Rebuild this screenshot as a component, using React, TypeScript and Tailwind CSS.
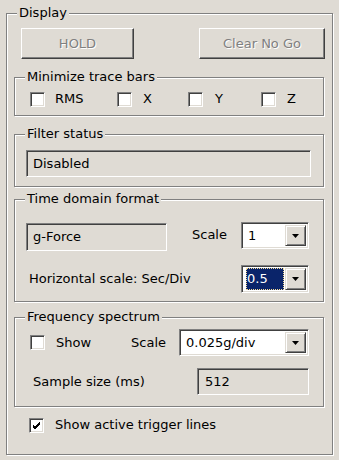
import React from "react";

function Group({ label, className, children }: { label: string; className: string; children?: React.ReactNode }) {
  return (
    <div className={"relative shrink-0 border border-[#808080] shadow-[inset_1px_1px_0_#fff,1px_1px_0_#fff] " + className}>
      <span className="absolute left-[10px] top-[-9px] bg-[#dfdbd4] px-[2px] leading-[16px] text-black whitespace-nowrap">
        {label}
      </span>
      {children}
    </div>
  );
}

function Check({ checked }: { checked?: boolean }) {
  return (
    <span className="relative flex h-[15px] w-[15px] shrink-0 items-center justify-center border border-t-[#808080] border-l-[#808080] border-b-white border-r-white bg-white shadow-[inset_1px_1px_0_#404040,inset_-1px_-1px_0_#dfdbd4]">
      {checked && (
        <svg width="9" height="9" viewBox="0 0 9 9">
          <path d="M1 4 L3 6 L8 1 M1 5 L3 7 L8 2 M1 6 L3 8 L8 3" stroke="#000" strokeWidth="1" fill="none" shapeRendering="crispEdges" />
        </svg>
      )}
    </span>
  );
}

function Sunken({ className, children }: { className: string; children?: React.ReactNode }) {
  return (
    <div className={"flex items-center border border-t-[#808080] border-l-[#808080] border-b-white border-r-white shadow-[inset_1px_1px_0_#404040,inset_-1px_-1px_0_#dfdbd4] " + className}>
      {children}
    </div>
  );
}

function Combo({ className, value, selected }: { className: string; value: string; selected?: boolean }) {
  return (
    <Sunken className={"bg-white p-[2px] " + className}>
      <div className="flex h-full flex-1 items-center pl-[2px] pr-[1px]">
        {selected ? (
          <span className="flex h-full flex-1 items-center bg-[#0a246a] pl-[1px] text-white outline outline-1 outline-dotted outline-[#f5db95] -outline-offset-1">
            {value}
          </span>
        ) : (
          <span className="pl-[2px] text-black">{value}</span>
        )}
      </div>
      <div className="flex h-full w-[21px] items-center justify-center border border-t-[#dfdbd4] border-l-[#dfdbd4] border-b-[#404040] border-r-[#404040] bg-[#dfdbd4] shadow-[inset_1px_1px_0_#fff,inset_-1px_-1px_0_#808080]">
        <svg width="7" height="4" viewBox="0 0 7 4">
          <path d="M0 0 H7 L3.5 4 Z" fill="#000" />
        </svg>
      </div>
    </Sunken>
  );
}

function Button({ className, children }: { className: string; children: React.ReactNode }) {
  return (
    <div className={"flex items-center justify-center border border-t-white border-l-white border-b-[#404040] border-r-[#404040] bg-[#dfdbd4] text-[#808080] shadow-[inset_-1px_-1px_0_#808080] [text-shadow:1px_1px_0_#fff] " + className}>
      {children}
    </div>
  );
}

export default function App() {
  return (
    <div className="h-[460px] w-[339px] bg-[#dfdbd4] pl-[6px] pt-[13px] font-['DejaVu_Sans',Verdana,sans-serif] text-[13px] leading-[16px] text-black">
      <Group label="Display" className="flex h-[442px] w-[327px] flex-col px-[7px]">
        <div className="mt-[14px] flex justify-between pl-[7px]">
          <Button className="h-[31px] w-[113px]">HOLD</Button>
          <Button className="h-[31px] w-[126px]">Clear No Go</Button>
        </div>

        <Group label="Minimize trace bars" className="mt-[18px] flex h-[39px] w-[310px] items-start pl-[15px] pt-[13px]">
          <div className="flex w-[87px] items-center gap-[10px]">
            <Check />
            <span>RMS</span>
          </div>
          <div className="flex w-[71px] items-center gap-[11px]">
            <Check />
            <span>X</span>
          </div>
          <div className="flex w-[73px] items-center gap-[12px]">
            <Check />
            <span>Y</span>
          </div>
          <div className="flex items-center gap-[11px]">
            <Check />
            <span>Z</span>
          </div>
        </Group>

        <Group label="Filter status" className="mt-[18px] h-[53px] w-[310px] pl-[11px] pt-[15px]">
          <Sunken className="h-[27px] w-[285px] pl-[6px]">Disabled</Sunken>
        </Group>

        <Group label="Time domain format" className="mt-[12px] flex h-[103px] w-[310px] flex-col pl-[11px]">
          <div className="mt-[22px] flex items-start">
            <Sunken className="mt-[1px] h-[28px] w-[141px] pl-[6px]">g-Force</Sunken>
            <span className="ml-[25px] mt-[5px]">Scale</span>
            <Combo className="ml-auto mr-[14px] h-[27px] w-[68px]" value="1" />
          </div>
          <div className="mt-[14px] flex items-center">
            <span className="ml-[3px]">Horizontal scale: Sec/Div</span>
            <Combo className="ml-auto mr-[14px] h-[28px] w-[68px]" value="0.5" selected />
          </div>
        </Group>

        <Group label="Frequency spectrum" className="mt-[15px] flex h-[90px] w-[310px] flex-col pl-[15px]">
          <div className="mt-[11px] flex items-center">
            <Check />
            <span className="ml-[11px]">Show</span>
            <span className="ml-[40px]">Scale</span>
            <Combo className="ml-auto mr-[14px] h-[27px] w-[130px]" value="0.025g/div" />
          </div>
          <div className="mt-[12px] flex items-center">
            <span className="ml-[3px]">Sample size (ms)</span>
            <Sunken className="ml-auto mr-[14px] h-[27px] w-[112px] pl-[7px]">512</Sunken>
          </div>
        </Group>

        <div className="ml-[15px] mt-[10px] flex items-center">
          <Check checked />
          <span className="ml-[11px]">Show active trigger lines</span>
        </div>
      </Group>
    </div>
  );
}
